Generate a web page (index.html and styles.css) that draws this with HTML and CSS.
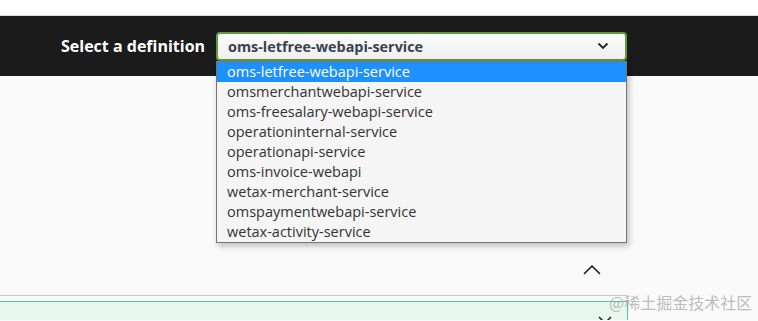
FILE: index.html
```html
<!DOCTYPE html>
<html>
<head>
<meta charset="utf-8">
<link rel="stylesheet" href="styles.css">
</head>
<body>
<div class="strip"></div>
<div class="topbar">
  <span class="label">Select a definition</span>
  <div class="select">
    <span>oms-letfree-webapi-service</span>
    <svg class="caret" width="12" height="8" viewBox="0 0 12 8"><path d="M1.5 1.5 L6 6 L10.5 1.5" fill="none" stroke="#222" stroke-width="1.8"/></svg>
  </div>
</div>
<div class="main">
  <div class="wrapper">
    <div class="toggle-row">
      <svg width="18" height="11" viewBox="0 0 18 11"><path d="M1 10 L9 2 L17 10" fill="none" stroke="#111" stroke-width="1.5"/></svg>
    </div>
    <div class="rule"></div>
    <div class="opblock">
      <svg class="down" width="14" height="6" viewBox="0 0 14 6"><path d="M1 1 L7 7 L13 1" fill="none" stroke="#222" stroke-width="1.5"/></svg>
    </div>
  </div>
</div>
<ul class="dropdown">
  <li class="active">oms-letfree-webapi-service</li>
  <li>omsmerchantwebapi-service</li>
  <li>oms-freesalary-webapi-service</li>
  <li>operationinternal-service</li>
  <li>operationapi-service</li>
  <li>oms-invoice-webapi</li>
  <li>wetax-merchant-service</li>
  <li>omspaymentwebapi-service</li>
  <li>wetax-activity-service</li>
</ul>
<div class="watermark">@稀土掘金技术社区</div>
</body>
</html>
```
FILE: styles.css
```css
html, body {
  margin: 0;
  padding: 0;
}
body {
  background: #fafafa;
  font-family: "Open Sans", "Noto Sans", sans-serif;
  width: 758px;
  height: 321px;
  overflow: hidden;
  position: relative;
}
.strip {
  height: 15px;
  background: #ffffff;
  border-bottom: 1px solid #d8d8d8;
}
.topbar {
  height: 60px;
  background: #1b1b1b;
  display: flex;
  align-items: center;
  padding-left: 61px;
  box-sizing: border-box;
}
.label {
  color: #ffffff;
  font-weight: 700;
  font-size: 16px;
  width: 155px;
}
.select {
  width: 411px;
  height: 29px;
  box-sizing: border-box;
  border: 2px solid #5e9a3c;
  border-radius: 4px;
  background: linear-gradient(#fbfbfb, #f0f0f0);
  display: flex;
  align-items: center;
  justify-content: space-between;
  padding: 0 16px 0 10px;
  font-weight: 700;
  font-size: 14.4px;
  color: #3b4151;
}
.main {
  display: flex;
}
.wrapper {
  width: 628px;
  display: flex;
  flex-direction: column;
}
.toggle-row {
  height: 219px;
  display: flex;
  justify-content: flex-end;
  align-items: flex-end;
  padding-right: 27px;
  box-sizing: border-box;
  padding-bottom: 20px;
}
.rule {
  height: 1px;
  background: #c8c8c8;
}
.opblock {
  margin-top: 5px;
  height: 19px;
  box-sizing: border-box;
  background: #e8f6f0;
  border-top: 1px solid #49cc90;
  border-right: 1px solid #49cc90;
  position: relative;
  overflow: hidden;
}
.down {
  position: absolute;
  left: 598px;
  top: 14px;
}
.dropdown {
  position: absolute;
  left: 216px;
  top: 61px;
  width: 411px;
  box-sizing: border-box;
  margin: 0;
  padding: 0;
  list-style: none;
  background: #f5f5f5;
  border: 1px solid #767676;
  box-shadow: 2px 3px 6px rgba(0,0,0,0.25);
}
.dropdown li {
  height: 20px;
  line-height: 20px;
  padding-left: 10px;
  font-size: 14.5px;
  color: #333333;
}
.dropdown li.active {
  background: #1e90ff;
  color: #ffffff;
}
.watermark {
  position: absolute;
  left: 609px;
  top: 290px;
  font-family: "Noto Sans CJK SC", sans-serif;
  font-size: 16px;
  color: rgba(160,160,160,0.7);
}
```
